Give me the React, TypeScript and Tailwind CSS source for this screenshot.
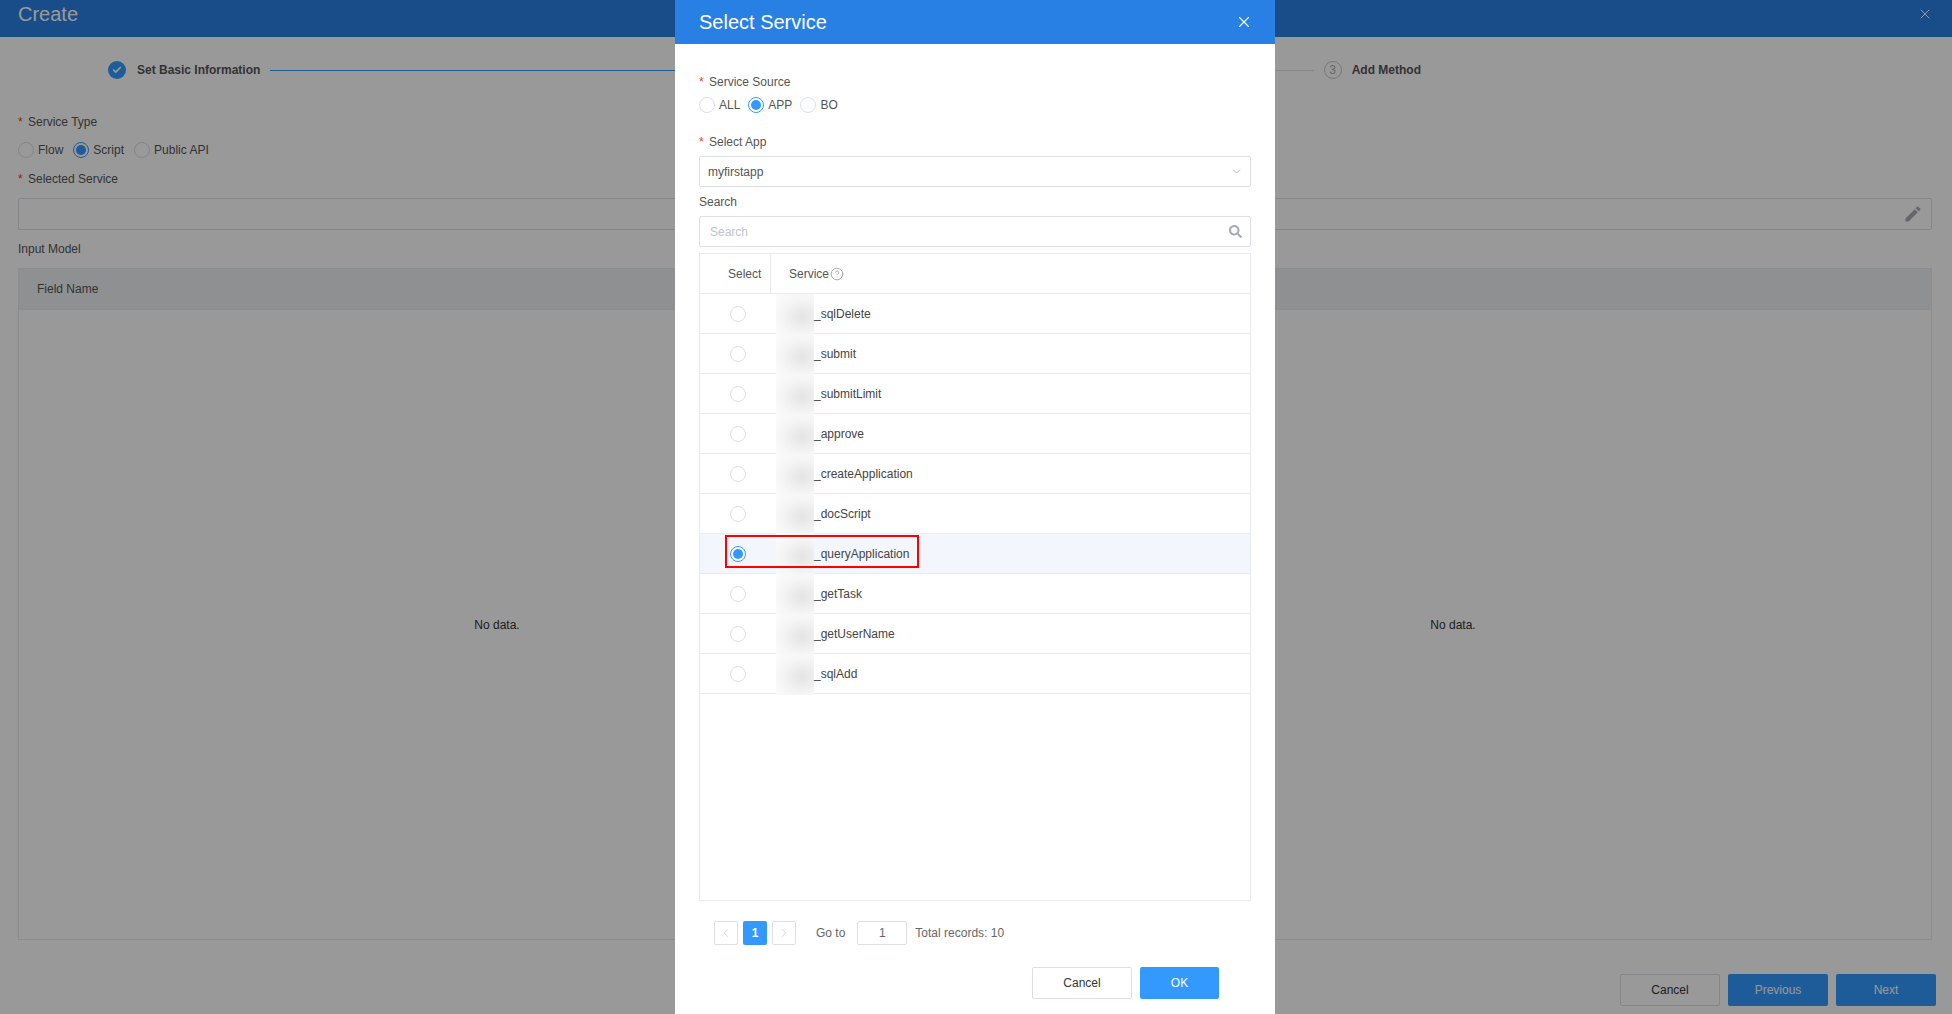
import React from "react";
import { Check, ChevronDown, ChevronLeft, ChevronRight, CircleHelp, X } from "lucide-react";
import { FaSearch } from "react-icons/fa";
import { MdEdit } from "react-icons/md";

const services = [
  "_sqlDelete",
  "_submit",
  "_submitLimit",
  "_approve",
  "_createApplication",
  "_docScript",
  "_queryApplication",
  "_getTask",
  "_getUserName",
  "_sqlAdd",
];

const Radio = ({ on, label }: { on?: boolean; label?: string }) => (
  <label className="flex items-center gap-[4px]">
    <span
      className={`flex h-[16px] w-[16px] items-center justify-center rounded-full border bg-white ${
        on ? "border-[#3399ff]" : "border-[#dcdfe6]"
      }`}
    >
      {on && <span className="h-[10px] w-[10px] rounded-full bg-[#3399ff]" />}
    </span>
    {label && <span className="text-[12px] leading-[16px] text-[#555]">{label}</span>}
  </label>
);

const FieldLabel = ({ text, required }: { text: string; required?: boolean }) => (
  <div className="flex h-[16px] items-center text-[12px] leading-[16px] text-[#555]">
    {required && <span className="w-[10px] text-[#f5400f]">*</span>}
    {text}
  </div>
);

const PageBehind = () => (
  <div className="flex h-full flex-col bg-white">
    <div className="flex h-[37px] items-start justify-between bg-[#2880e4] pl-[18px] pr-[19px] text-white">
      <span className="text-[20px] leading-[28px]">Create</span>
      <X size={16} strokeWidth={1.5} className="mt-[6px]" />
    </div>

    <div className="mt-[24px] flex h-[18px] items-center pl-[108px] pr-[531px] text-[12px] font-bold text-[#555]">
      <span className="flex h-[18px] w-[18px] items-center justify-center rounded-full bg-[#3399ff]">
        <Check size={10} strokeWidth={4} className="text-white" />
      </span>
      <span className="ml-[11px]">Set Basic Information</span>
      <span className="ml-[10px] h-px flex-1 bg-[#3399ff]" />
      <span className="ml-0 h-px flex-1 bg-[#dcdfe6]" />
      <span className="ml-[10px] flex h-[18px] w-[18px] items-center justify-center rounded-full border border-[#c8c8c8] text-[12px] font-normal text-[#aaa]">
        3
      </span>
      <span className="ml-[10px]">Add Method</span>
    </div>

    <div className="flex flex-1 flex-col pl-[18px] pr-[20px]">
      <div className="mt-[35px]">
        <FieldLabel text="Service Type" required />
      </div>
      <div className="mt-[12px] flex gap-[4px]">
        <Radio label="Flow" />
        <span className="w-[2px]" />
        <Radio on label="Script" />
        <span className="w-[2px]" />
        <Radio label="Public API" />
      </div>
      <div className="mt-[13px]">
        <FieldLabel text="Selected Service" required />
      </div>
      <div className="mt-[11px] flex h-[32px] items-center justify-end rounded-[2px] border border-[#dcdfe6] pr-[8px]">
        <MdEdit size={20} className="text-[#a8abb5]" />
      </div>
      <div className="mt-[11px]">
        <FieldLabel text="Input Model" />
      </div>
      <div className="mt-[11px] flex h-[672px] flex-col border border-[#e8ebf0]">
        <div className="flex h-[41px] items-center border-b border-[#e8ebf0] bg-[#eef0f2] pl-[18px] text-[12px] text-[#555]">
          Field Name
        </div>
        <div className="grid flex-1 grid-cols-2 items-center text-center text-[12px] text-[#333]">
          <span>No data.</span>
          <span>No data.</span>
        </div>
      </div>
    </div>

    <div className="mb-[8px] mt-[34px] flex justify-end gap-[8px] pr-[16px] text-[12px]">
      <button className="h-[32px] w-[100px] rounded-[2px] border border-[#dcdfe6] bg-white text-[#333]">Cancel</button>
      <button className="h-[32px] w-[100px] rounded-[2px] bg-[#3399ff] text-white">Previous</button>
      <button className="h-[32px] w-[100px] rounded-[2px] bg-[#3399ff] text-white">Next</button>
    </div>
  </div>
);

const ServiceModal = () => (
  <div className="absolute bottom-0 left-[675px] top-0 w-[600px] bg-white">
    <div className="flex h-[44px] items-center justify-between bg-[#2880e4] pl-[24px] pr-[22px] text-white">
      <span className="text-[20px]">Select Service</span>
      <X size={18} strokeWidth={1.5} />
    </div>

    <div className="px-[24px] pt-[30px]">
      <FieldLabel text="Service Source" required />
      <div className="mt-[7px] flex gap-[8px]">
        <Radio label="ALL" />
        <Radio on label="APP" />
        <Radio label="BO" />
      </div>

      <div className="mt-[21px]">
        <FieldLabel text="Select App" required />
      </div>
      <div className="mt-[6px] flex h-[31px] items-center justify-between rounded-[2px] border border-[#dcdfe6] pl-[8px] pr-[7px] text-[12px] text-[#555]">
        myfirstapp
        <ChevronDown size={13} strokeWidth={1.2} className="text-[#999]" />
      </div>

      <div className="mt-[7px]">
        <FieldLabel text="Search" />
      </div>
      <div className="mt-[6px] flex h-[31px] items-center justify-between rounded-[2px] border border-[#dcdfe6] pl-[10px] pr-[8px] text-[12px] text-[#c0c4cc]">
        Search
        <FaSearch size={13} className="text-[#a8abb5]" />
      </div>

      <div className="mt-[6px] h-[648px] border border-[#e8ebf0]">
        <div className="flex h-[40px] items-center border-b border-[#e8ebf0] text-[12px] text-[#555]">
          <div className="flex h-full w-[71px] items-center border-r border-[#e8ebf0] pl-[28px]">Select</div>
          <div className="flex items-center gap-[1px] pl-[18px]">
            Service
            <CircleHelp size={14} strokeWidth={1} className="text-[#777]" />
          </div>
        </div>
        {services.map((name) => {
          const picked = name === "_queryApplication";
          return (
            <div
              key={name}
              className={`relative flex h-[40px] items-center border-b border-[#e8ebf0] text-[12px] text-[#444] ${
                picked ? "bg-[#f3f7fd]" : ""
              }`}
            >
              <div className="w-[71px] pl-[30px]">
                <Radio on={picked} />
              </div>
              <span className="ml-[5px] h-[41px] w-[38px] self-start bg-[radial-gradient(ellipse_at_70%_55%,#e4e4e4_0%,#f5f5f5_55%,#fbfbfb_100%)]" />
              {name}
              {picked && (
                <div className="absolute left-[25px] top-[1px] h-[33px] w-[194px] border-2 border-[#ff0000]" />
              )}
            </div>
          );
        })}
      </div>

      <div className="mt-[20px] flex h-[24px] items-center pl-[15px] text-[12px] text-[#666]">
        <span className="flex h-[24px] w-[24px] items-center justify-center rounded-[2px] border border-[#dcdfe6] text-[#c0c4cc]">
          <ChevronLeft size={14} strokeWidth={1.2} />
        </span>
        <span className="ml-[5px] flex h-[24px] w-[24px] items-center justify-center rounded-[2px] bg-[#3399ff] font-bold text-white">
          1
        </span>
        <span className="ml-[5px] flex h-[24px] w-[24px] items-center justify-center rounded-[2px] border border-[#dcdfe6] text-[#c0c4cc]">
          <ChevronRight size={14} strokeWidth={1.2} />
        </span>
        <span className="ml-[20px]">Go to</span>
        <span className="ml-[12px] flex h-[24px] w-[50px] items-center justify-center rounded-[2px] border border-[#dcdfe6]">
          1
        </span>
        <span className="ml-[8px]">Total records: 10</span>
      </div>

      <div className="mt-[22px] flex gap-[8px] pl-[333px] text-[12px]">
        <button className="h-[32px] w-[100px] rounded-[2px] border border-[#dcdfe6] bg-white text-[#333]">Cancel</button>
        <button className="h-[32px] w-[79px] rounded-[2px] bg-[#3399ff] text-white">OK</button>
      </div>
    </div>
  </div>
);

export default function App() {
  return (
    <div className="relative h-screen w-full overflow-hidden font-['Liberation_Sans',Arial,sans-serif]">
      <PageBehind />
      <div className="absolute inset-0 bg-black/40" />
      <ServiceModal />
    </div>
  );
}
